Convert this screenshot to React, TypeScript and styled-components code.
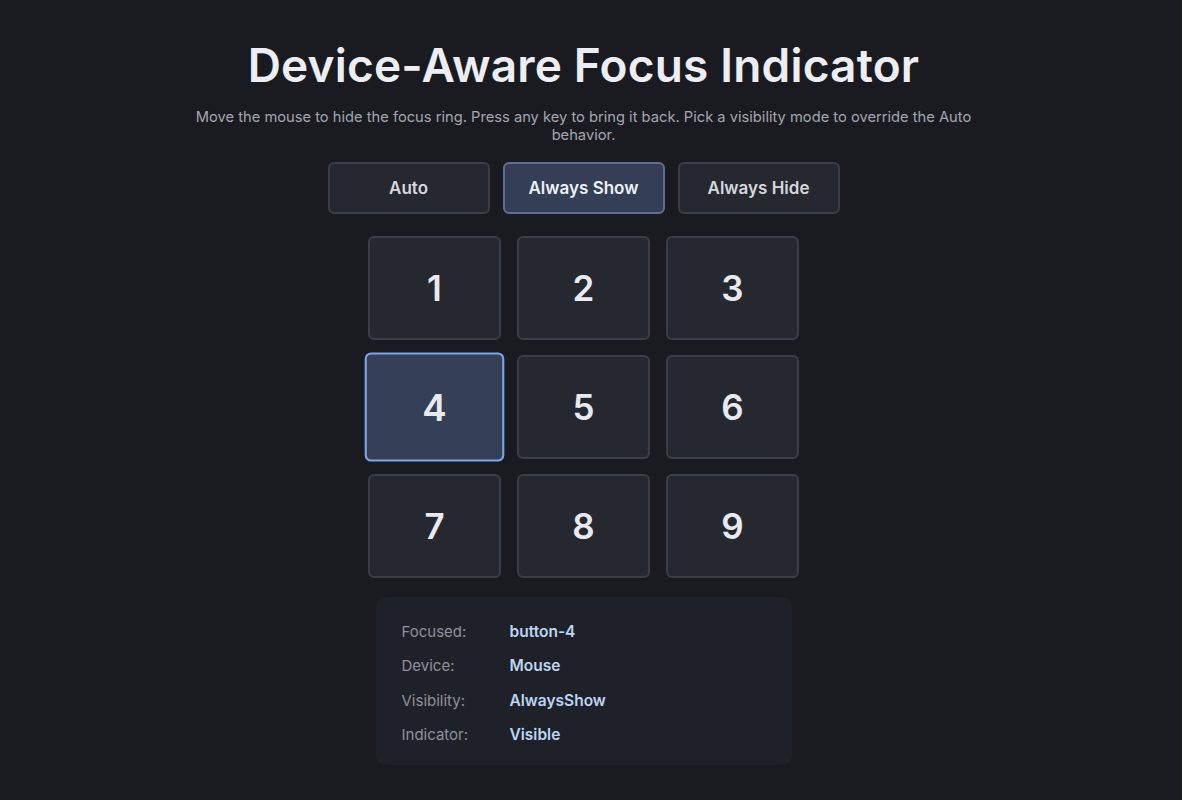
import styled, { createGlobalStyle } from 'styled-components'

const GlobalStyle = createGlobalStyle`
  html, body {
    margin: 0;
    padding: 0;
    background: #1a1b20;
  }
  body {
    font-family: Inter, "Noto Sans", sans-serif;
    color: #e5e7eb;
  }
`

const Page = styled.main`
  display: flex;
  flex-direction: column;
  align-items: center;
  padding: 38px 15px 40px 0;
`

const Title = styled.h1`
  margin: 0;
  font-size: 46px;
  line-height: 54px;
  font-weight: 600;
  letter-spacing: 0.004em;
  color: #eceef3;
`

const Subtitle = styled.p`
  margin: 17px 0 0;
  max-width: 800px;
  text-align: center;
  font-size: 14.7px;
  line-height: 17.5px;
  color: #a2a6b0;
`

const ModeBar = styled.div`
  display: flex;
  gap: 13px;
  margin-top: 18px;
`

const ModeButton = styled.button<{ $active?: boolean }>`
  width: 162px;
  height: 52px;
  border-radius: 6px;
  border: 2px solid ${p => (p.$active ? '#5d6f91' : '#3b3e47')};
  background: ${p => (p.$active ? '#343f55' : '#262830')};
  color: ${p => (p.$active ? '#eef0f5' : '#d4d7de')};
  font-family: inherit;
  font-size: 17px;
  font-weight: 600;
  cursor: pointer;
`

const Grid = styled.div`
  display: grid;
  grid-template-columns: repeat(3, 133px);
  grid-auto-rows: 104px;
  gap: 15px 16px;
  margin-top: 22px;
`

const Cell = styled.button<{ $focused?: boolean }>`
  border-radius: 6px;
  border: 2px solid ${p => (p.$focused ? '#7ba6ea' : '#3b3e47')};
  background: ${p => (p.$focused ? '#354057' : '#262830')};
  color: #e8eaf0;
  font-family: inherit;
  font-size: 35px;
  font-weight: 600;
  cursor: pointer;
  transform: ${p => (p.$focused ? 'scale(1.05)' : 'none')};
`

const Status = styled.section`
  margin-top: 19px;
  width: 416px;
  box-sizing: border-box;
  padding: 25px 26px 20px;
  border-radius: 10px;
  background: #1f2129;
  display: grid;
  grid-template-columns: 108px 1fr;
  row-gap: 14.3px;
  font-size: 15px;
  line-height: 20px;
`

const Label = styled.span`
  color: #8d919b;
`

const Value = styled.span`
  color: #bcd5f5;
  font-size: 15.5px;
  font-weight: 600;
`

const modes = ['Auto', 'Always Show', 'Always Hide']
const status: [string, string][] = [
  ['Focused:', 'button-4'],
  ['Device:', 'Mouse'],
  ['Visibility:', 'AlwaysShow'],
  ['Indicator:', 'Visible'],
]

export default function App() {
  return (
    <>
      <GlobalStyle />
      <Page>
        <Title>Device-Aware Focus Indicator</Title>
        <Subtitle>
          Move the mouse to hide the focus ring. Press any key to bring it back. Pick a visibility mode to override the Auto behavior.
        </Subtitle>
        <ModeBar>
          {modes.map(m => (
            <ModeButton key={m} $active={m === 'Always Show'}>
              {m}
            </ModeButton>
          ))}
        </ModeBar>
        <Grid>
          {[1, 2, 3, 4, 5, 6, 7, 8, 9].map(n => (
            <Cell key={n} $focused={n === 4}>
              {n}
            </Cell>
          ))}
        </Grid>
        <Status>
          {status.flatMap(([k, v]) => [
            <Label key={k}>{k}</Label>,
            <Value key={v}>{v}</Value>,
          ])}
        </Status>
      </Page>
    </>
  )
}
